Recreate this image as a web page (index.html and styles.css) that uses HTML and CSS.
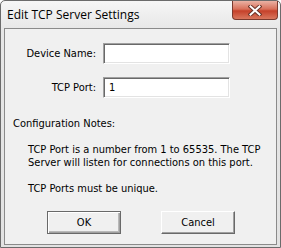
FILE: index.html
```html
<!DOCTYPE html>
<html lang="en">
<head>
    <meta charset="UTF-8">
    <title>Edit TCP Server Settings</title>
    <link rel="stylesheet" href="styles.css">
</head>
<body>
    <div class="window">
        <div class="titlebar">
            <span class="title">Edit TCP Server Settings</span>
            <div class="close">
                <svg width="14" height="11" viewBox="0 0 14 11">
                    <path d="M2.5 1.5 L11.5 9.5 M11.5 1.5 L2.5 9.5" stroke="#6a3328" stroke-width="4" stroke-linecap="square"/>
                    <path d="M2.5 1.5 L11.5 9.5 M11.5 1.5 L2.5 9.5" stroke="#ffffff" stroke-width="2" stroke-linecap="square"/>
                </svg>
            </div>
        </div>
        <div class="client">
            <div class="row">
                <label class="label" for="deviceName">Device Name:</label>
                <input class="field" type="text" id="deviceName" value="">
            </div>
            <div class="row">
                <label class="label" for="tcpPort">TCP Port:</label>
                <input class="field" type="text" id="tcpPort" value="1">
            </div>
            <p class="notes-title">Configuration Notes:</p>
            <div class="notes">
                <p>TCP Port is a number from 1 to 65535. The TCP Server will listen for connections on this port.</p>
                <p>TCP Ports must be unique.</p>
            </div>
            <div class="buttons">
                <button class="btn default">OK</button>
                <button class="btn">Cancel</button>
            </div>
        </div>
    </div>
</body>
</html>
```

FILE: styles.css
```css
body {
    margin: 0;
    font-family: "DejaVu Sans Condensed", "DejaVu Sans", sans-serif;
    font-stretch: condensed;
    font-size: 11px;
    color: #000;
}
.window {
    width: 281px;
    height: 248px;
    box-sizing: border-box;
    border: 1px solid #6b6b6b;
    border-radius: 5px 5px 0 0;
    background: linear-gradient(#f6f6f6, #e6e6e6 30px, #e2e2e2);
    padding: 0 3px 2px 3px;
    display: flex;
    flex-direction: column;
}
.titlebar {
    height: 27px;
    display: flex;
    align-items: flex-start;
    justify-content: space-between;
}
.title {
    font-family: "Open Sans", "Noto Sans", sans-serif;
    font-stretch: normal;
    font-size: 12px;
    padding: 5px 0 0 3px;
}
.close {
    width: 46px;
    height: 19px;
    margin-right: -1px;
    box-sizing: border-box;
    border: 1px solid #7a3a2e;
    border-top: none;
    border-radius: 0 0 4px 4px;
    background: linear-gradient(#eab2a4, #d8705a 45%, #c5412a 55%, #d9775e);
    display: flex;
    justify-content: center;
    align-items: center;
}
.client {
    flex: 1;
    background: #f0f0f0;
    border: 1px solid #8a8a8a;
    padding: 0 0 0 8px;
}
.row {
    display: flex;
    align-items: center;
    margin-top: 14px;
}
.row + .row {
    margin-top: 13px;
}
.label {
    width: 83px;
    text-align: right;
    padding-right: 7px;
}
.field {
    width: 127px;
    height: 21px;
    box-sizing: border-box;
    border: 1px solid;
    border-color: #a0a0a0 #ffffff #ffffff #a0a0a0;
    box-shadow: inset 1px 1px 0 #696969, inset -1px -1px 0 #e3e3e3;
    background: #fff;
    font-family: inherit;
    font-size: 11px;
    padding: 0 0 0 5px;
    margin: 0;
}
p {
    margin: 0;
}
.notes-title {
    margin-top: 19px;
}
.notes {
    padding-left: 15px;
    padding-right: 14px;
    margin-top: 13px;
    line-height: 13px;
}
.notes p + p {
    margin-top: 13px;
}
.buttons {
    display: flex;
    gap: 40px;
    margin: 16px 0 0 34px;
}
.btn {
    width: 74px;
    height: 23px;
    box-sizing: border-box;
    border: 1px solid;
    border-color: #ffffff #696969 #696969 #ffffff;
    box-shadow: inset -1px -1px 0 #a0a0a0;
    border-radius: 0;
    background: #f0f0f0;
    font-family: inherit;
    font-size: 11px;
    padding: 0;
}
.btn.default {
    border-color: #696969;
    box-shadow: inset 1px 1px 0 #ffffff, inset -1px -1px 0 #a0a0a0, inset -2px -2px 0 #b9b9b9;
}
```
